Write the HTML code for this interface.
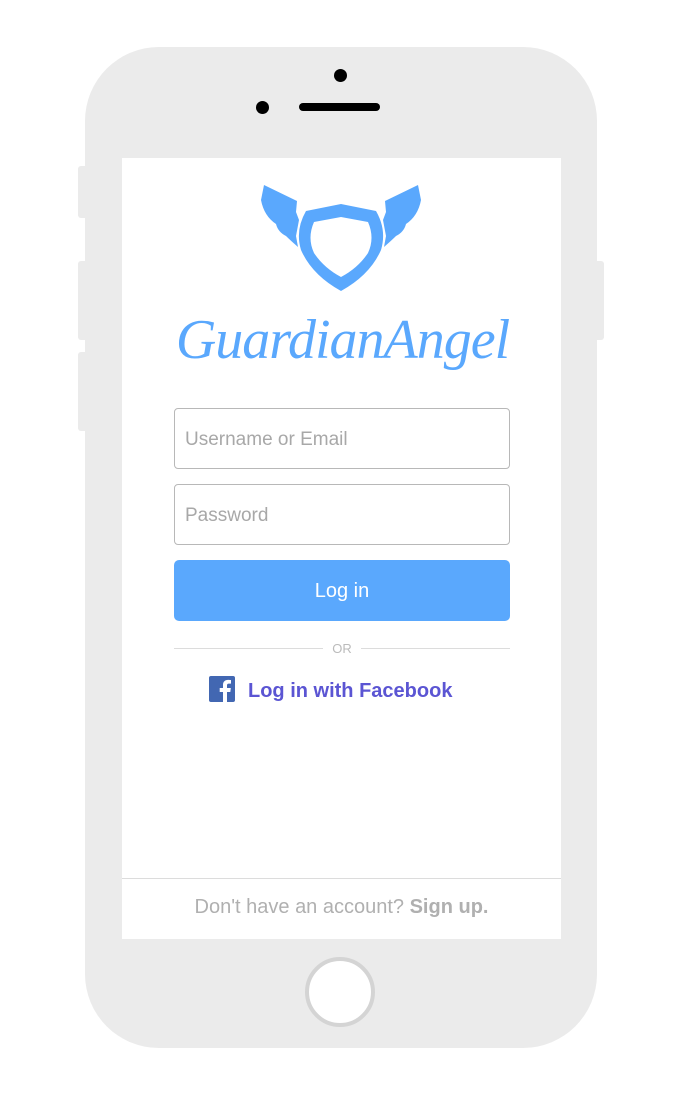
<!DOCTYPE html>
<html><head><meta charset="utf-8"><style>
html,body{margin:0;padding:0;background:#fff;width:680px;height:1095px;overflow:hidden;font-family:"Liberation Sans",sans-serif}
.abs{position:absolute}
.phone{left:85px;top:47px;width:512px;height:1001px;background:#ebebeb;border-radius:74px}
.btn{background:#ebebeb;border-radius:3px}
.screen{left:122px;top:158px;width:439px;height:781px;background:#fff}
.inp{left:174px;height:61px;border:1px solid #b8b8b8;border-radius:4px;box-sizing:border-box;width:336px;font-size:19px;color:#a8a8a8;padding-left:10px;line-height:62px}
</style></head><body>
<div class="abs btn" style="left:78px;top:166px;width:10px;height:52px"></div>
<div class="abs btn" style="left:78px;top:261px;width:10px;height:79px"></div>
<div class="abs btn" style="left:78px;top:352px;width:10px;height:79px"></div>
<div class="abs btn" style="left:594px;top:261px;width:10px;height:79px"></div>
<div class="abs phone"></div>
<div class="abs" style="left:334px;top:69px;width:13px;height:13px;border-radius:50%;background:#000"></div>
<div class="abs" style="left:256px;top:101px;width:13px;height:13px;border-radius:50%;background:#000"></div>
<div class="abs" style="left:299px;top:103px;width:81px;height:8px;border-radius:4px;background:#000"></div>
<div class="abs" style="left:305px;top:957px;width:62px;height:62px;border-radius:50%;border:4px solid #d4d4d4;background:#fff"></div>
<div class="abs screen"></div>
<svg class="abs" style="left:255px;top:180px" width="172" height="115" viewBox="255 180 172 115">
<path d="M264 185 L297 201 L296 212 L299 220 L296 236 L298 247 Q290 240 286 236 Q278 232 276 224 Q264 216 261 200 Z" fill="#5aa8fd"/>
<path d="M418 185 L385 201 L386 212 L383 220 L386 236 L384 247 Q392 240 396 236 Q404 232 406 224 Q418 216 421 200 Z" fill="#5aa8fd"/>
<path d="M341 204 L376 211 Q387 230 381 250 Q370 275 341 291 Q312 275 301 250 Q295 230 306 211 Z M341 217 L314 222 Q307 238 314 253 Q324 268 341 277 Q358 268 368 253 Q375 238 368 222 Z" fill="#5aa8fd" fill-rule="evenodd"/>
</svg>
<div class="abs" style="left:170px;top:308px;width:345px;text-align:center;font-family:'Liberation Serif',serif;font-style:italic;font-size:56px;color:#5aa8fd;letter-spacing:-1px">GuardianAngel</div>
<div class="abs inp" style="top:408px">Username or Email</div>
<div class="abs inp" style="top:484px">Password</div>
<div class="abs" style="left:174px;top:560px;width:336px;height:61px;background:#5aa8fd;border-radius:5px;color:#fff;font-size:20px;text-align:center;line-height:63px">Log in</div>
<div class="abs" style="left:174px;top:648px;width:149px;height:1px;background:#dcdcdc"></div>
<div class="abs" style="left:361px;top:648px;width:149px;height:1px;background:#dcdcdc"></div>
<div class="abs" style="left:323px;top:641px;width:38px;text-align:center;font-size:13px;color:#bbb">OR</div>
<svg class="abs" style="left:209px;top:676px" width="26" height="26" viewBox="0 0 26 26"><rect width="26" height="26" rx="2" fill="#4267b2"/><path d="M18 26V16h3.3l.5-4H18V9.5c0-1.1.4-1.9 2-1.9h2V4.1c-.4 0-1.6-.2-3-.2-3 0-5 1.8-5 5.1V12h-3.3v4H14v10z" fill="#fff"/></svg>
<div class="abs" style="left:248px;top:680px;font-size:20px;font-weight:bold;color:#5b55d3">Log in with Facebook</div>
<div class="abs" style="left:122px;top:878px;width:439px;height:1px;background:#dcdcdc"></div>
<div class="abs" style="left:122px;top:896px;width:439px;text-align:center;font-size:20px;color:#b0b0b0">Don't have an account? <b>Sign up.</b></div>
</body></html>
